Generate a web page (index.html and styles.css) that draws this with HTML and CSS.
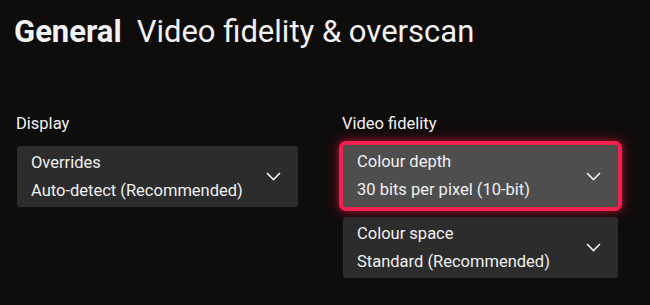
FILE: index.html
```html
<!DOCTYPE html>
<html lang="en">
<head>
<meta charset="utf-8">
<title>Video fidelity &amp; overscan</title>
<link rel="stylesheet" href="styles.css">
</head>
<body>
<header class="title">
  <span class="title-main">General</span><span class="title-sub">Video fidelity &amp; overscan</span>
</header>
<main class="columns">
  <section class="col col-left">
    <div class="label">Display</div>
    <div class="select">
      <div class="select-text">
        <div class="select-name">Overrides</div>
        <div class="select-value">Auto-detect (Recommended)</div>
      </div>
      <svg class="chev" width="15" height="9" viewBox="0 0 15 9"><polyline points="1,1 7.5,7.5 14,1" fill="none" stroke="#f2f2f2" stroke-width="1.6"/></svg>
    </div>
  </section>
  <section class="col col-right">
    <div class="label">Video fidelity</div>
    <div class="stack">
      <div class="select focused">
        <div class="select-text">
          <div class="select-name">Colour depth</div>
          <div class="select-value">30 bits per pixel (10-bit)</div>
        </div>
        <svg class="chev" width="15" height="9" viewBox="0 0 15 9"><polyline points="1,1 7.5,7.5 14,1" fill="none" stroke="#f2f2f2" stroke-width="1.6"/></svg>
      </div>
      <div class="select">
        <div class="select-text">
          <div class="select-name">Colour space</div>
          <div class="select-value">Standard (Recommended)</div>
        </div>
        <svg class="chev" width="15" height="9" viewBox="0 0 15 9"><polyline points="1,1 7.5,7.5 14,1" fill="none" stroke="#f2f2f2" stroke-width="1.6"/></svg>
      </div>
    </div>
  </section>
</main>
</body>
</html>
```
FILE: styles.css
```css
html, body {
  margin: 0;
  padding: 0;
}
body {
  width: 650px;
  height: 305px;
  overflow: hidden;
  background: #0f0c0c;
  color: #f2f2f2;
  font-family: Roboto, "Liberation Sans", sans-serif;
}
.title {
  padding: 14px 0 0 14px;
  font-size: 31px;
  line-height: 36px;
  white-space: nowrap;
}
.title-main {
  font-weight: 700;
  margin-right: 15px;
}
.title-sub {
  font-weight: 400;
}
.columns {
  display: flex;
  gap: 45px;
  padding-left: 17px;
  margin-top: 63px;
}
.col {
  display: flex;
  flex-direction: column;
}
.col-left .select {
  width: 281px;
}
.col-right .select {
  width: 275px;
}
.label {
  font-size: 16.5px;
  line-height: 22px;
  margin-left: -1px;
  margin-bottom: 11px;
}
.col-right .label {
  margin-bottom: 10px;
}
.stack {
  display: flex;
  flex-direction: column;
  gap: 10px;
}
.select {
  box-sizing: border-box;
  height: 61px;
  display: flex;
  align-items: center;
  justify-content: space-between;
  padding: 0 17px 0 14px;
  background: #2c2c2d;
  border-radius: 3px;
}
.select.focused {
  height: 62px;
  background: #4e4e4f;
  outline: 4px solid #f3214f;
  outline-offset: 0;
  box-shadow: 0 0 6px 4px rgba(255, 30, 70, 0.55), 0 0 14px 6px rgba(255, 20, 60, 0.25);
}
.select-text {
  font-size: 16.5px;
  line-height: 28px;
  white-space: nowrap;
}
.select-name,
.select-value {
  color: #f0f0f0;
}
.chev {
  display: block;
  flex: none;
}
```
